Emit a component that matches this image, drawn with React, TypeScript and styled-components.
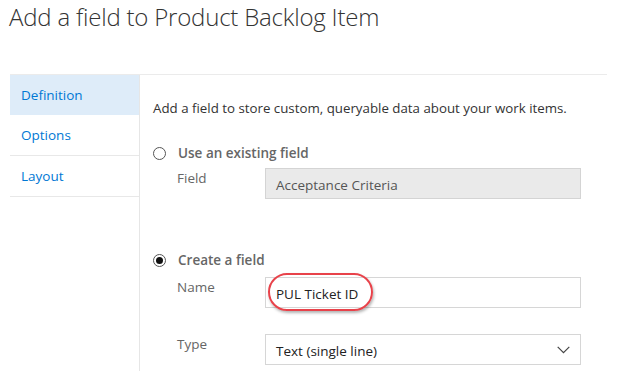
import React from "react";
import styled, { createGlobalStyle } from "styled-components";

const Global = createGlobalStyle`
  html, body { margin: 0; padding: 0; background: #fff; }
  body { font-family: "Open Sans", "Noto Sans", sans-serif; color: #333; }
  * { box-sizing: border-box; }
`;

const Page = styled.div`
  width: 619px;
  height: 371px;
  overflow: hidden;
  position: relative;
`;

const Title = styled.h1`
  margin: 0;
  padding: 0 0 0 9px;
  height: 74px;
  font-size: 24px;
  font-weight: 300;
  line-height: 33px;
  color: #333;
  letter-spacing: -0.2px;
`;

const Body = styled.div`
  margin-left: 10px;
  width: 597px;
  border-top: 1px solid #ebebeb;
  display: grid;
  grid-template-columns: 130px 1fr;
  height: 297px;
`;

const Nav = styled.nav`
  border-right: 1px solid #e6e6e6;
  display: flex;
  flex-direction: column;
`;

const NavItem = styled.div<{ $active?: boolean }>`
  height: ${(p) => (p.$active ? "40px" : "41px")};
  padding-left: 11px;
  display: flex;
  align-items: center;
  font-size: 13.5px;
  color: #0078d4;
  background: ${(p) => (p.$active ? "#deecf9" : "transparent")};
  border-bottom: ${(p) => (p.$active ? "none" : "1px solid #e8e8e8")};
`;

const Content = styled.div`
  padding: 24px 0 0 13px;
  display: flex;
  flex-direction: column;
`;

const Intro = styled.p`
  margin: 0;
  font-size: 13.3px;
  line-height: 18px;
  color: #333;
`;

const Option = styled.label<{ $mt: number }>`
  display: flex;
  align-items: center;
  gap: 12px;
  font-size: 13.5px;
  font-weight: 600;
  color: #666;
  height: 20px;
  margin-top: ${(p) => p.$mt}px;
`;

const Radio = styled.span<{ $checked?: boolean }>`
  width: 13px;
  height: 13px;
  border-radius: 50%;
  border: 1px solid #555;
  display: flex;
  align-items: center;
  justify-content: center;
  flex: none;
  &::after {
    content: "";
    width: 7px;
    height: 7px;
    border-radius: 50%;
    background: ${(p) => (p.$checked ? "#111" : "transparent")};
  }
`;

const Row = styled.div<{ $mt: number }>`
  display: grid;
  grid-template-columns: 88px 316px;
  margin-top: ${(p) => p.$mt}px;
  margin-left: 24px;
`;

const Label = styled.div`
  font-size: 13.5px;
  color: #666;
  line-height: 18px;
  padding-top: 1px;
`;

const Box = styled.div<{ $disabled?: boolean }>`
  height: 31px;
  border: 1px solid ${(p) => (p.$disabled ? "#d4d4d4" : "#d6d6d6")};
  background: ${(p) => (p.$disabled ? "#eaeaea" : "#fff")};
  display: flex;
  align-items: center;
  justify-content: space-between;
  padding: 2px 10px 0 10px;
  font-size: 13.5px;
  color: ${(p) => (p.$disabled ? "#555" : "#222")};
`;

const BoxWrap = styled.div`
  position: relative;
`;

const Highlight = styled.div`
  position: absolute;
  left: 3px;
  top: -4px;
  width: 105px;
  height: 38px;
  border: 2.5px solid #e8424a;
  border-radius: 19px;
  box-shadow: 1px 2px 3px rgba(0, 0, 0, 0.3);
  pointer-events: none;
`;

const ChevronIcon = styled.svg`
  margin-top: -2px;
  flex: none;
`;

const Chevron = () => (
  <ChevronIcon width="13" height="8" viewBox="0 0 13 8">
    <path d="M0.7 0.8 L6.5 6.6 L12.3 0.8" fill="none" stroke="#444" strokeWidth="1.2" />
  </ChevronIcon>
);

export default function App() {
  return (
    <Page>
      <Global />
      <Title>Add a field to Product Backlog Item</Title>
      <Body>
        <Nav>
          <NavItem $active>Definition</NavItem>
          <NavItem>Options</NavItem>
          <NavItem>Layout</NavItem>
        </Nav>
        <Content>
          <Intro>Add a field to store custom, queryable data about your work items.</Intro>
          <Option $mt={26}>
            <Radio />
            Use an existing field
          </Option>
          <Row $mt={5}>
            <Label>Field</Label>
            <Box $disabled>Acceptance Criteria</Box>
          </Row>
          <Option $mt={51}>
            <Radio $checked />
            Create a field
          </Option>
          <Row $mt={7}>
            <Label>Name</Label>
            <BoxWrap>
              <Box>PUL Ticket ID</Box>
              <Highlight />
            </BoxWrap>
          </Row>
          <Row $mt={26}>
            <Label>Type</Label>
            <Box>
              Text (single line)
              <Chevron />
            </Box>
          </Row>
        </Content>
      </Body>
    </Page>
  );
}
